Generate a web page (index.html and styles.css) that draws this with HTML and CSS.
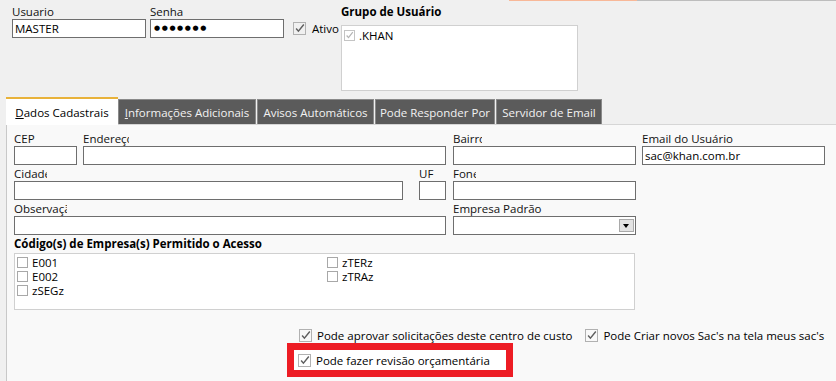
FILE: index.html
```html
<!DOCTYPE html>
<html lang="pt-BR">
<head>
    <meta charset="UTF-8">
    <meta name="viewport" content="width=device-width, initial-scale=1.0">
    <title>Cadastro de Usuário</title>
    <link rel="stylesheet" href="styles.css">
</head>
<body>
    <div class="topline"><span class="seg-salmon"></span><span class="seg-grey"></span></div>

    <div class="header">
        <div class="field w-user">
            <div class="label">Usuario</div>
            <div class="input">MASTER</div>
        </div>
        <div class="field w-user">
            <div class="label">Senha</div>
            <div class="input pass">●●●●●●●</div>
        </div>
        <div class="check ativo">
            <span class="box"><svg viewBox="0 0 13 13"><path d="M2.5 6.5 L5.2 9.6 L11.6 1.8"/></svg></span>
            Ativo
        </div>
        <div class="field">
            <div class="label bold group-label">Grupo de Usuário</div>
            <div class="listbox group-list">
                <div class="item">
                    <span class="minibox off"><svg viewBox="0 0 11 11"><path d="M2 5.5 L4.3 8 L9.5 1.5"/></svg></span>
                    .KHAN
                </div>
            </div>
        </div>
    </div>

    <div class="tabs">
        <div class="tab active"><span><u>D</u>ados Cadastrais</span></div>
        <div class="tab t-info"><span><u>I</u>nformações Adicionais</span></div>
        <div class="tab t-avisos">Avisos Automáticos</div>
        <div class="tab t-resp">Pode Responder Por</div>
        <div class="tab t-mail">Servidor de Email</div>
    </div>

    <div class="panel">
        <div class="row">
            <div class="field w-cep">
                <div class="label">CEP</div>
                <div class="input"></div>
            </div>
            <div class="field w-end">
                <div class="label clip" style="width: 46px">Endereço</div>
                <div class="input"></div>
            </div>
            <div class="field w-mid">
                <div class="label clip" style="width: 29px">Bairro</div>
                <div class="input"></div>
            </div>
            <div class="field w-mid last">
                <div class="label">Email do Usuário</div>
                <div class="input">sac@khan.com.br</div>
            </div>
        </div>

        <div class="row">
            <div class="field w-cid">
                <div class="label clip" style="width: 33px">Cidade</div>
                <div class="input"></div>
            </div>
            <div class="field w-uf">
                <div class="label">UF</div>
                <div class="input"></div>
            </div>
            <div class="field w-mid">
                <div class="label clip" style="width: 23px">Fone</div>
                <div class="input"></div>
            </div>
        </div>

        <div class="row">
            <div class="field w-obs">
                <div class="label clip" style="width: 53px">Observação</div>
                <div class="input"></div>
            </div>
            <div class="field w-mid">
                <div class="label">Empresa Padrão</div>
                <div class="input combo"><span class="drop"></span></div>
            </div>
        </div>

        <div class="label bold codes-label">Código(s) de Empresa(s) Permitido o Acesso</div>
        <div class="listbox codes">
            <div class="item"><span class="minibox"></span>E001</div>
            <div class="item"><span class="minibox"></span>E002</div>
            <div class="item"><span class="minibox"></span>zSEGz</div>
            <div class="item"><span class="minibox"></span>zTERz</div>
            <div class="item"><span class="minibox"></span>zTRAz</div>
        </div>

        <div class="options">
            <div class="check">
                <span class="box"><svg viewBox="0 0 13 13"><path d="M2.5 6.5 L5.2 9.6 L11.6 1.8"/></svg></span>
                Pode aprovar solicitações deste centro de custo
            </div>
            <div class="check">
                <span class="box"><svg viewBox="0 0 13 13"><path d="M2.5 6.5 L5.2 9.6 L11.6 1.8"/></svg></span>
                Pode Criar novos Sac's na tela meus sac's
            </div>
        </div>

        <div class="highlight">
            <div class="check">
                <span class="box"><svg viewBox="0 0 13 13"><path d="M2.5 6.5 L5.2 9.6 L11.6 1.8"/></svg></span>
                Pode fazer revisão orçamentária
            </div>
        </div>
    </div>
</body>
</html>
```

FILE: styles.css
```css
html, body {
    height: 100%;
}
body {
    margin: 0;
    background-color: #f0f0f0;
    font-family: "Open Sans", "Noto Sans", sans-serif;
    font-size: 11.5px;
    color: #000;
    overflow: hidden;
}
.topline {
    display: flex;
    height: 1px;
    padding-left: 509px;
}
.seg-salmon {
    width: 128px;
    background-color: #f8b898;
}
.seg-grey {
    flex: 1;
    background-color: #bdbdbd;
}
.header {
    display: flex;
    align-items: flex-start;
    height: 92px;
    padding: 4px 0 0 12px;
}
.field {
    display: flex;
    flex-direction: column;
    margin-right: 4px;
}
.label {
    height: 14px;
    line-height: 14px;
    white-space: nowrap;
    color: #111;
}
.clip {
    overflow: hidden;
}
.bold {
    font-weight: bold;
    color: #000;
}
.input {
    height: 19px;
    box-sizing: border-box;
    border: 1px solid #6e6e6e;
    background-color: #fff;
    padding-left: 2px;
    line-height: 17px;
    white-space: nowrap;
}
.pass {
    font-family: "DejaVu Sans", sans-serif;
    font-size: 7px;
    letter-spacing: 1.6px;
    padding-left: 3px;
}
.w-user { width: 134px; }
.check {
    display: flex;
    align-items: center;
    gap: 5px;
    white-space: nowrap;
}
.box {
    width: 13px;
    height: 13px;
    box-sizing: border-box;
    border: 1px solid #b1b1b1;
    flex-shrink: 0;
}
.box svg, .minibox svg {
    display: block;
    width: 100%;
    height: 100%;
    overflow: visible;
}
.box path {
    fill: none;
    stroke: #5f5f5f;
    stroke-width: 1.7;
}
.ativo {
    width: 48px;
    margin: 16px 0 0 5px;
    gap: 6px;
}
.group-label {
    margin-bottom: 6px;
}
.listbox {
    box-sizing: border-box;
    background-color: #fff;
    border: 1px solid #d0d0d0;
}
.group-list {
    width: 237px;
    height: 66px;
    padding: 1px 2px;
}
.item {
    display: flex;
    align-items: center;
    gap: 4px;
    height: 14px;
}
.minibox {
    width: 11px;
    height: 11px;
    box-sizing: border-box;
    border: 1px solid #a8a8a8;
    background-color: #fff;
}
.minibox.off {
    border-color: #c4c4c4;
}
.minibox path {
    fill: none;
    stroke: #b4b4b4;
    stroke-width: 1.5;
}
.group-list .item {
    height: 13px;
    margin-top: 2px;
}
.tabs {
    display: flex;
    align-items: flex-end;
    height: 27px;
    padding-left: 6px;
}
.tab {
    display: flex;
    align-items: center;
    justify-content: center;
    height: 25px;
    box-sizing: border-box;
    background-color: #5b5b5b;
    border: 1px solid #8a8a8a;
    border-bottom: none;
    color: #f2f2f2;
    white-space: nowrap;
    margin-right: 1px;
}
.tab.active {
    position: relative;
    z-index: 1;
    width: 112px;
    height: 28px;
    margin-bottom: -1px;
    background-color: #fff;
    border: none;
    border-top: 2px solid #e8b23a;
    color: #000;
    margin-right: 0;
}
.t-info { width: 138px; }
.t-avisos { width: 117px; }
.t-resp { width: 120px; }
.t-mail { width: 106px; }
.panel {
    height: 100%;
    box-sizing: border-box;
    margin-left: 6px;
    padding: 7px 0 0 7px;
    background-color: #f9f9f9;
    border-top: 1px solid #d6d6d6;
    border-left: 1px solid #c8c8c8;
}
.row {
    display: flex;
    margin-bottom: 2px;
}
.row .field {
    margin-right: 7px;
}
.w-cep { width: 63px; }
.row .w-cep { margin-right: 6px; }
.w-end { width: 363px; }
.w-mid { width: 183px; }
.row .w-mid { margin-right: 6px; }
.w-cid { width: 389px; }
.row .w-cid { margin-right: 16px; }
.w-uf { width: 27px; }
.w-obs { width: 432px; }
.combo {
    display: flex;
    justify-content: flex-end;
    padding: 1px;
}
.drop {
    width: 15px;
    height: 13px;
    box-sizing: border-box;
    margin-top: 1px;
    background-color: #e3e3e3;
    border: 1px solid #a9a9a9;
    position: relative;
}
.drop::after {
    content: "";
    position: absolute;
    left: 3px;
    top: 4px;
    border-left: 3.5px solid transparent;
    border-right: 3.5px solid transparent;
    border-top: 4px solid #000;
}
.codes-label {
    margin-top: 2px;
    margin-bottom: 2px;
}
.codes {
    width: 621px;
    height: 57px;
    padding: 1px 2px;
    display: grid;
    grid-template-columns: 310px 310px;
    grid-template-rows: repeat(3, 14px);
    grid-auto-flow: column;
}
.codes .item {
    gap: 4px;
}
.options {
    display: flex;
    gap: 13px;
    height: 15px;
    margin-top: 18px;
    padding-left: 285px;
}
.highlight {
    display: flex;
    width: 208px;
    height: 20px;
    margin-left: 273px;
    padding-left: 4px;
    background-color: #fff;
    border: 7px solid #ed1c24;
}
```
